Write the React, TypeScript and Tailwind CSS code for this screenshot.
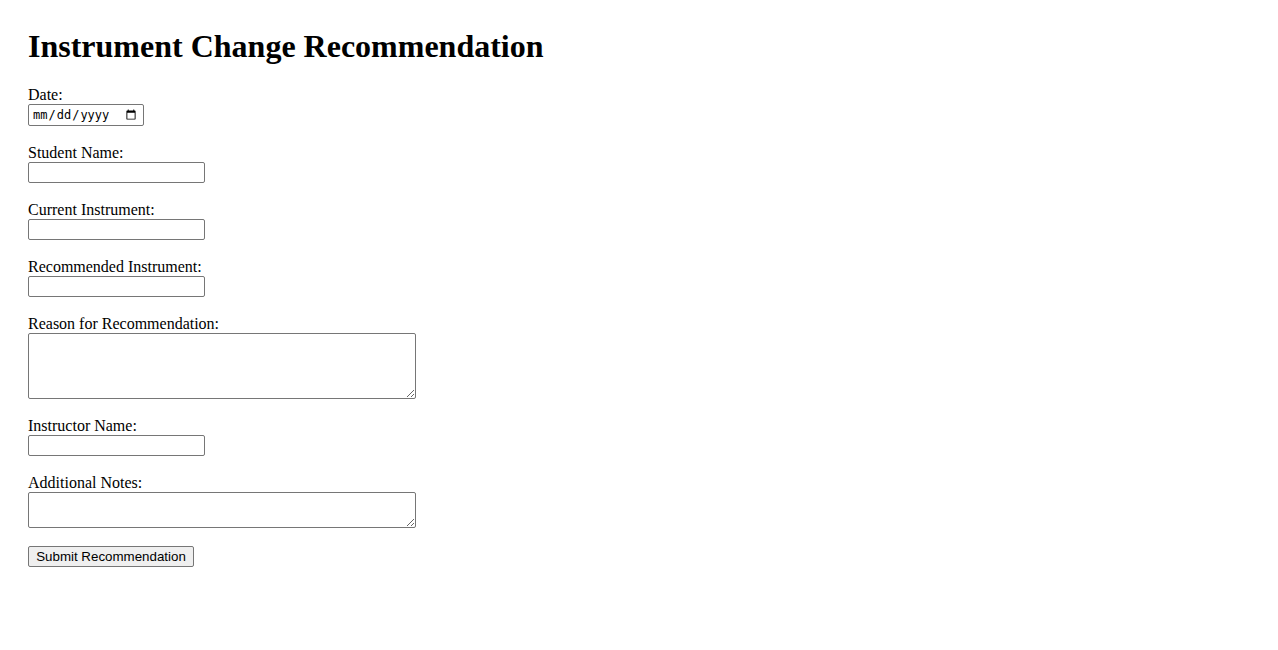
import { useState } from "react";

const fieldLabel = "block leading-[18px] text-[16px]";
const textInput =
  "block w-[177px] h-[21px] border border-[#767676] rounded-[2px] px-[2px] py-[1px] text-[13.33px] bg-white";
const textBox =
  "block w-[388px] border border-[#767676] rounded-[2px] px-[2px] py-[2px] text-[13.33px] bg-white";

const App: React.FC = () => {
  const [form, setForm] = useState({
    date: "",
    student: "",
    current: "",
    recommended: "",
    reason: "",
    instructor: "",
    notes: "",
  });

  const update = (key: keyof typeof form) => (evt: any) => {
    setForm({ ...form, [key]: evt.target.value });
  };

  return (
    <div
      className="min-h-[650px] bg-white text-black px-[28px] pt-[28px]"
      style={{ fontFamily: '"Liberation Serif", "Times New Roman", serif' }}
    >
      <h1 className="text-[32px] font-bold leading-[37px] mb-[21px]">
        Instrument Change Recommendation
      </h1>
      <form onSubmit={(e) => e.preventDefault()}>
        <div className="mb-[18px]">
          <label className={fieldLabel}>Date:</label>
          <input
            type="date"
            value={form.date}
            onChange={update("date")}
            className="block w-[116px] h-[22px] border border-[#767676] rounded-[2px] pl-[3px] pr-[4px] text-[12px] bg-white"
            style={{ fontFamily: '"DejaVu Sans Mono", "Liberation Mono", monospace' }}
          />
        </div>
        <div className="mb-[18px]">
          <label className={fieldLabel}>Student Name:</label>
          <input type="text" value={form.student} onChange={update("student")} className={textInput} />
        </div>
        <div className="mb-[18px]">
          <label className={fieldLabel}>Current Instrument:</label>
          <input type="text" value={form.current} onChange={update("current")} className={textInput} />
        </div>
        <div className="mb-[18px]">
          <label className={fieldLabel}>Recommended Instrument:</label>
          <input type="text" value={form.recommended} onChange={update("recommended")} className={textInput} />
        </div>
        <div className="mb-[18px]">
          <label className={fieldLabel}>Reason for Recommendation:</label>
          <textarea value={form.reason} onChange={update("reason")} className={`${textBox} h-[66px]`} />
        </div>
        <div className="mb-[18px]">
          <label className={fieldLabel}>Instructor Name:</label>
          <input type="text" value={form.instructor} onChange={update("instructor")} className={textInput} />
        </div>
        <div className="mb-[18px]">
          <label className={fieldLabel}>Additional Notes:</label>
          <textarea value={form.notes} onChange={update("notes")} className={`${textBox} h-[36px]`} />
        </div>
        <button
          type="submit"
          className="block w-[166px] h-[21px] bg-[#efefef] border border-[#767676] rounded-[2px] text-[13.33px] leading-[19px] text-black"
          style={{ fontFamily: '"Liberation Sans", Arial, sans-serif' }}
        >
          Submit Recommendation
        </button>
      </form>
    </div>
  );
};

export default App;
